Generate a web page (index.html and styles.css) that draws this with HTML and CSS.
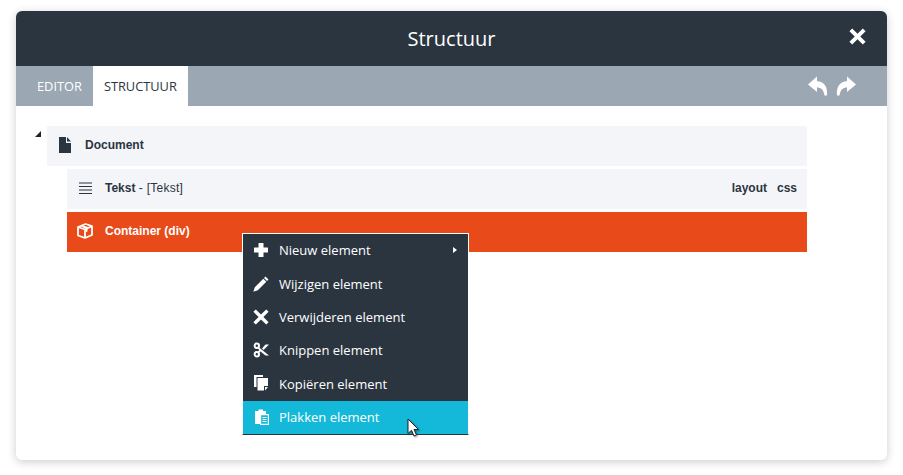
FILE: index.html
```html
<!DOCTYPE html>
<html lang="en">
<head>
    <meta charset="UTF-8">
    <title>Structuur</title>
    <link rel="stylesheet" href="styles.css">
</head>
<body>
    <div class="dialog">
        <header class="dialog-head">
            <h1>Structuur</h1>
            <svg class="close-icon" viewBox="0 0 16 16"><path d="M3 0.4 8 5.4 13 0.4 15.6 3 10.6 8 15.6 13 13 15.6 8 10.6 3 15.6 0.4 13 5.4 8 0.4 3Z" fill="#fff"/></svg>
        </header>
        <nav class="tabs">
            <a class="tab">EDITOR</a>
            <a class="tab active">STRUCTUUR</a>
            <div class="history">
                <svg viewBox="0 0 20 20"><path d="M9.5 0.5 0.5 8.5 9.5 16V11.5C13.5 11.5 16 13.5 17 19.5H19.5C20.500 11 16.5 5.500 9.5 5.300Z" fill="#fff"/></svg>
                <svg viewBox="0 0 20 20"><path d="M10.5 0.5 19.5 8.5 10.5 16V11.5C6.5 11.5 4 13.5 3 19.500H0.5C-0.5 11 3.5 5.500 10.5 5.300Z" fill="#fff"/></svg>
            </div>
        </nav>
        <div class="tree">
            <div class="tree-root">
                <span class="caret"></span>
                <div class="row">
                    <svg class="row-icon" viewBox="0 0 16 16"><path d="M2 0H9V6H14V16H2ZM10 0 14 4.5H10Z" fill="#2b3540"/></svg>
                    <span class="row-label"><b>Document</b></span>
                </div>
            </div>
            <div class="tree-children">
                <div class="row">
                    <svg class="row-icon" viewBox="0 0 16 16"><path d="M2 3H15M2 6.5H15M2 10H15M2 13.5H15" stroke="#2b3540" stroke-width="1.2" fill="none"/></svg>
                    <span class="row-label"><b>Tekst</b> <span class="row-type">- [Tekst]</span></span>
                    <span class="row-links"><b>layout</b><b>css</b></span>
                </div>
                <div class="row selected">
                    <svg class="row-icon" viewBox="0 0 16 16"><path d="M1 4 8.5 1 15 3V12L8 15 1 12.5ZM1 4 8 6.5V15M8 6.5 15 3" stroke="#fff" stroke-width="1.8" fill="none" stroke-linejoin="round"/><path d="M4 3.2 6 2.4 12.5 4.5 10.5 5.5V8.5L9 9V6Z" fill="#fff"/></svg>
                    <span class="row-label"><b>Container (div)</b></span>
                </div>
            </div>
        </div>

        <ul class="context-menu">
            <li>
                <svg viewBox="0 0 16 16"><path d="M5.5 1.5Q5.5 1 6 1H10Q10.5 1 10.5 1.5V5.5H14.5Q15 5.5 15 6V10Q15 10.5 14.5 10.5H10.5V14.5Q10.5 15 10 15H6Q5.5 15 5.5 14.5V10.5H1.5Q1 10.5 1 10V6Q1 5.5 1.5 5.5H5.5Z" fill="#fff"/></svg>
                Nieuw element
                <span class="submenu-arrow"></span>
            </li>
            <li>
                <svg viewBox="0 0 16 16"><path d="M12.5 0.5 15.5 3.5 14 5 11 2ZM10.3 2.7 13.3 5.7 4.8 14.2 0.3 15.7 1.8 11.2Z" fill="#fff"/></svg>
                Wijzigen element
            </li>
            <li>
                <svg viewBox="0 0 16 16"><path d="M2.8 0.4 8 5.6 13.2 0.4 15.6 2.8 10.4 8 15.6 13.2 13.2 15.6 8 10.4 2.8 15.6 0.4 13.2 5.6 8 0.4 2.8Z" fill="#fff"/></svg>
                Verwijderen element
            </li>
            <li>
                <svg viewBox="0 0 16 16"><circle cx="3.8" cy="3.8" r="2.2" stroke="#fff" stroke-width="2" fill="none"/><circle cx="3.8" cy="12.2" r="2.2" stroke="#fff" stroke-width="2" fill="none"/><path d="M5.5 5 16 13.5H12.5L7.5 9.5 5.5 11 4.8 9.5 6.3 8 4.8 6.5ZM9 6.5 12.5 2.5H16L10.5 8Z" fill="#fff"/></svg>
                Knippen element
            </li>
            <li>
                <svg viewBox="0 0 16 16"><path d="M1 -1H10V1H3.5V11H1Z" fill="#fff"/><path d="M4.5 2H15V10H11V14.5H4.5Z" fill="#fff"/><path d="M12 11H15L12 14.5Z" fill="#fff"/></svg>
                Kopiëren element
            </li>
            <li class="hover">
                <svg viewBox="0 0 16 16"><path d="M2 2H5.5V0.5H10V2H13V5H7V15H2Z" fill="#fff"/><path d="M7.6 5.6H15.4V15.4H7.6ZM9.5 8.5H13.5M9.5 10.5H13.5M9.5 12.5H13.5" stroke="#fff" stroke-width="1.2" fill="none"/></svg>
                Plakken element
            </li>
        </ul>
        <svg class="cursor" viewBox="0 0 14 20"><path d="M1 1V15.5L4.5 12.3 7 18 9.5 17 7 11.5H11.5Z" fill="#fff" stroke="#222" stroke-width="1"/></svg>
    </div>
</body>
</html>
```

FILE: styles.css
```css
/* General Styles */
body {
    margin: 0;
    padding: 11px 16px 15px;
    background-color: #fff;
    font-family: 'Liberation Sans', Arial, sans-serif;
    color: #2b3540;
}
.dialog {
    position: relative;
    height: 449px;
    border-radius: 6px;
    overflow: hidden;
    background-color: #fff;
    box-shadow: 0 2px 10px rgba(0, 0, 0, 0.2);
}

/* Header */
.dialog-head {
    display: flex;
    justify-content: center;
    align-items: center;
    height: 55px;
    background-color: #2b3540;
    position: relative;
}
.dialog-head h1 {
    margin: 0;
    font-family: 'Open Sans', sans-serif;
    font-size: 20px;
    font-weight: 400;
    color: #fff;
}
.close-icon {
    position: absolute;
    top: 17px;
    right: 21px;
    width: 17px;
    height: 17px;
}

/* Tabs */
.tabs {
    display: flex;
    align-items: stretch;
    height: 40px;
    background-color: #9ba7b2;
    font-family: 'Open Sans', sans-serif;
    font-size: 12.8px;
}
.tab {
    display: flex;
    align-items: center;
    padding: 0 11px 0 21px;
    color: #fff;
}
.tab.active {
    padding: 0 11px;
    background-color: #fff;
    color: #2b3540;
}
.history {
    display: flex;
    align-items: center;
    gap: 8px;
    margin-left: auto;
    padding: 0 30px 0 0;
}
.history svg {
    width: 21px;
    height: 20px;
}

/* Tree */
.tree {
    padding: 20px 80px 0 31px;
    font-size: 12px;
}
.tree-root {
    position: relative;
}
.caret {
    position: absolute;
    top: 5px;
    left: -12px;
    width: 0;
    height: 0;
    border-style: solid;
    border-width: 0 0 6px 6px;
    border-color: transparent transparent #222 transparent;
}
.tree-children {
    display: flex;
    flex-direction: column;
    gap: 3px;
    margin: 3px 0 0 20px;
}
.row {
    display: flex;
    align-items: center;
    box-sizing: border-box;
    height: 40px;
    padding: 0 10px 2px;
    background-color: #f3f5f9;
}
.row-icon {
    width: 16px;
    height: 16px;
    margin-right: 12px;
    flex: none;
}
.row-label b {
    font-weight: 700;
}
.row-type {
    letter-spacing: 0.25px;
}
.row-links {
    display: flex;
    gap: 10px;
    margin-left: auto;
}
.row.selected {
    background-color: #e84a1a;
    color: #fff;
}

/* Context menu */
.context-menu {
    position: absolute;
    top: 222px;
    left: 226px;
    width: 227px;
    margin: 0;
    padding: 0;
    list-style: none;
    box-sizing: border-box;
    border: 1px solid #fff;
    border-bottom: 1px solid #2b3540;
    background-color: #2b3540;
    font-family: 'Open Sans', sans-serif;
    font-size: 13px;
    color: #fff;
}
.context-menu li {
    display: flex;
    align-items: center;
    box-sizing: border-box;
    height: 33.4px;
    padding: 0 0 1px 10px;
}
.context-menu li svg {
    width: 16px;
    height: 16px;
    margin-right: 10px;
    flex: none;
    overflow: visible;
}
.context-menu li.hover {
    background-color: #14b9d9;
}
.submenu-arrow {
    width: 0;
    height: 0;
    margin-left: auto;
    margin-right: 11px;
    border-style: solid;
    border-width: 3.5px 0 3.5px 4px;
    border-color: transparent transparent transparent #fff;
}
.cursor {
    position: absolute;
    top: 407px;
    left: 391px;
    width: 14px;
    height: 20px;
    filter: drop-shadow(1px 1px 1px rgba(0, 0, 0, 0.4));
}
```
